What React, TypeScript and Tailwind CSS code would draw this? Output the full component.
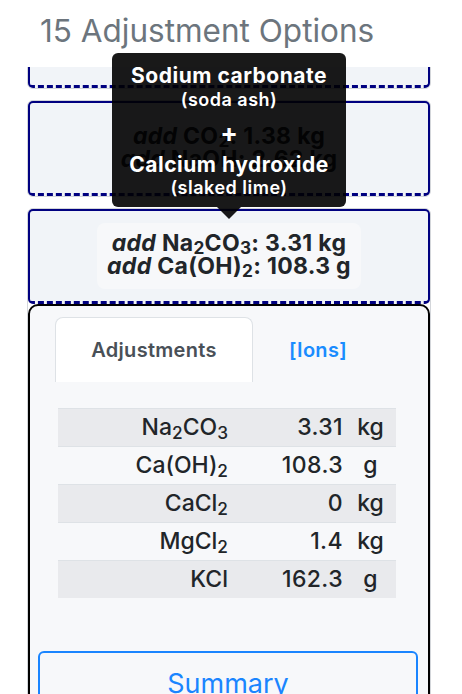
import React from "react";

type Row = { name: React.ReactNode; amount: string; unit: string };

const rows: Row[] = [
  { name: <>Na<sub>2</sub>CO<sub>3</sub></>, amount: "3.31", unit: "kg" },
  { name: <>Ca(OH)<sub>2</sub></>, amount: "108.3", unit: "g" },
  { name: <>CaCl<sub>2</sub></>, amount: "0", unit: "kg" },
  { name: <>MgCl<sub>2</sub></>, amount: "1.4", unit: "kg" },
  { name: <>KCl</>, amount: "162.3", unit: "g" },
];

function Line({ name, amount }: { name: React.ReactNode; amount: string }) {
  return (
    <div className="whitespace-nowrap">
      <i>add</i> {name}: {amount}
    </div>
  );
}

function Card({ children, boxed, expanded }: { children: React.ReactNode; boxed?: boolean; expanded?: React.ReactNode }) {
  return (
    <div className="shrink-0 border border-[#d3d6da] rounded-[6px]">
      <div className="h-[95px] flex items-center justify-center bg-[#f1f4f8] border-2 border-b-[3px] border-[#000080] [border-bottom-style:dashed] rounded-[5px]">
        <div
          className={
            "text-center text-[23px] leading-[23px] tracking-[0.3px] font-bold text-[#212529] " +
            (boxed ? "bg-[#f7f8fa] rounded-[8px] px-[10px] pt-[9px] pb-[11px]" : "")
          }
        >
          {children}
        </div>
      </div>
      {expanded}
    </div>
  );
}

function Panel() {
  return (
    <div className="border-2 border-black rounded-t-[10px] bg-[#f7f8fa] h-[420px]">
      {/* tabs */}
      <div className="flex items-end pt-[11px] pl-[25px]">
        <div className="h-[65px] w-[198px] flex items-center justify-center bg-white border border-b-0 border-[#dee2e6] rounded-t-[8px] text-[20px] tracking-[0.3px] font-semibold text-[#495057]">
          Adjustments
        </div>
        <div className="h-[65px] w-[130px] flex items-center justify-center text-[20px] tracking-[0.3px] font-semibold text-[#1a8cff]">
          [Ions]
        </div>
      </div>

      {/* amounts table */}
      <div className="mt-[26px] ml-[28px] w-[338px] text-[23px] font-medium text-[#212529]">
        {rows.map((r, i) => (
          <div
            key={i}
            className={
              "grid grid-cols-[170px_117px_51px] items-center h-[38px] border-t border-[#dee2e6] " +
              (i % 2 === 0 ? "bg-[#e9eaed]" : "")
            }
          >
            <span className="text-right">{r.name}</span>
            <span className="text-right pr-[2px] tracking-[0.4px]">{r.amount}</span>
            <span className="text-center">{r.unit}</span>
          </div>
        ))}
      </div>

      <button className="mt-[53px] ml-[8px] w-[380px] h-[64px] flex justify-center pt-[11px] border-2 border-[#1a85ff] rounded-[6px] text-[27px] text-[#1a85ff]">
        Summary
      </button>
    </div>
  );
}

export default function App() {
  return (
    <div className="relative w-[462px] h-[694px] overflow-hidden bg-white flex flex-col [font-family:Inter,sans-serif] [&_sub]:bottom-[-0.2em]">
      <h1 className="pl-[40px] pt-[13px] text-[31.5px] leading-[36px] text-[#6c757d] font-normal">
        15 Adjustment Options
      </h1>

      {/* scrolling list of options */}
      <div className="mt-[18px] ml-[27px] w-[404px] flex-1 overflow-hidden">
        <div className="flex flex-col gap-[11px] mt-[-75px]">
          <Card>
            <Line name={<>CaCl<sub>2</sub></>} amount="2.10 kg" />
            <Line name={<>NaOH</>} amount="1.95 kg" />
          </Card>
          <Card>
            <Line name={<>CO<sub>2</sub></>} amount="1.38 kg" />
            <Line name={<>NaOH</>} amount="2.62 kg" />
          </Card>
          <Card boxed expanded={<Panel />}>
            <Line name={<>Na<sub>2</sub>CO<sub>3</sub></>} amount="3.31 kg" />
            <Line name={<>Ca(OH)<sub>2</sub></>} amount="108.3 g" />
          </Card>
        </div>
      </div>

      {/* tooltip */}
      <div className="absolute left-[112px] top-[53px] w-[234px] h-[154px] bg-black/90 rounded-[6px] text-white text-center pt-[10px]">
        <div className="text-[21px] leading-[26px] tracking-[0.5px] font-bold">Sodium carbonate</div>
        <div className="text-[18px] leading-[22px] tracking-[0.5px] font-semibold">(soda ash)</div>
        <div className="mt-[11px] text-[26px] leading-[22px] font-bold">+</div>
        <div className="mt-[9px] text-[21px] leading-[24px] tracking-[0.5px] font-bold">Calcium hydroxide</div>
        <div className="text-[18px] leading-[22px] tracking-[0.5px] font-semibold">(slaked lime)</div>
        <div className="absolute left-1/2 -translate-x-1/2 top-full w-0 h-0 border-x-[12px] border-x-transparent border-t-[12px] border-t-black/90" />
      </div>
    </div>
  );
}
